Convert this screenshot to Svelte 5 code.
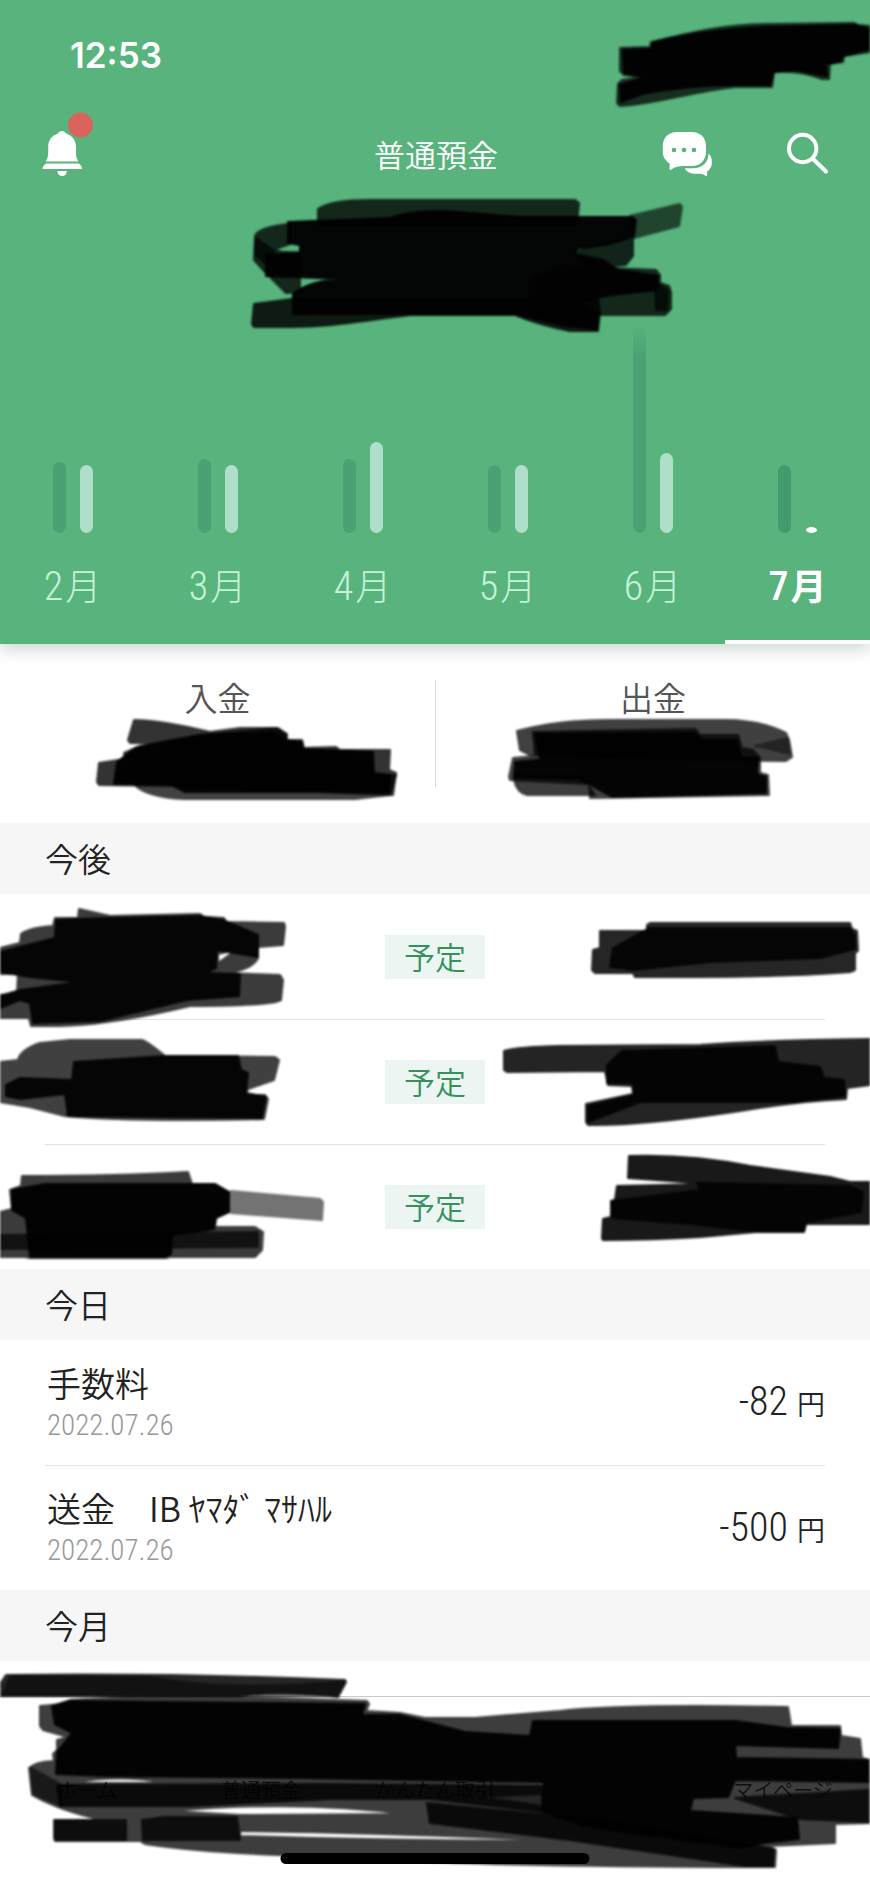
<script lang="ts">
	interface Month {
		label: string;
		income: number;
		spend: number;
	}

	interface Mark {
		d: string;
		o: number;
	}

	const months: Month[] = [
		{ label: '2', income: 71, spend: 68 },
		{ label: '3', income: 74, spend: 68 },
		{ label: '4', income: 74, spend: 91 },
		{ label: '5', income: 68, spend: 68 },
		{ label: '6', income: 209, spend: 80 },
		{ label: '7', income: 68, spend: 6 }
	];

	const today = [
		{ title: '手数料', date: '2022.07.26', amount: '-82' },
		{ title: '送金　IB ﾔﾏﾀﾞ ﾏｻﾊﾙ', date: '2022.07.26', amount: '-500' }
	];

	const tabs = ['ホーム', '普通預金', 'かんたん取引', '', 'マイページ'];

	let selected = $state('7');

	// marker strokes that cover the private parts, one set per block
	const headerMarks: Mark[] = [
		{ o: 0.75, d: 'M620 48L650 47 651 42C690 33 720 25 765 24L854 23 858 25 870 26V52L844 56 843 62 830 64 829 79 822 79Q800 70 774 72L772 87H735C690 92 660 103 620 106L617 103 618 84 622 80 642 77 624 75 620 71Z' },
		{ o: 0.97, d: 'M623 50L651 49 653 43Q700 30 765 27L854 25 870 29V49L843 56 841 61 826 64 827 76 795 70 774 72 770 85 735 85Q690 85 642 94L621 102 620 85 645 77 624 73Z' },
		{ o: 0.78, d: 'M318 209C328 202 350 200 370 200H575L579 203 577 224H318Z' },
		{ o: 0.78, d: 'M255 236Q258 227 290 224V244L273 250Q285 253 300 252V292L286 293 265 272 254 260Z' },
		{ o: 0.62, d: 'M630 216L680 204 682 207 679 226 634 238Z' },
		{ o: 0.8, d: 'M574 252L590 247 633 238V256L626 265 590 268Z' },
		{ o: 0.78, d: 'M560 266L656 270 660 275V283L669 286 671 292V309L665 315H530V280Z' },
		{ o: 0.85, d: 'M254 304L292 299H598L600 312 598 331H570Q540 325 515 315H410C360 321 330 327 290 327H254L252 324Z' },
		{ o: 0.97, d: 'M288 222L390 218Q420 207 470 213L520 217H632L636 220 634 236Q610 246 578 248L574 254 603 260 618 270 658 276 657 290 610 295 575 303 598 312 597 329 565 326 515 314H293V294Q310 280 345 279L266 276V255L300 253V245L288 243Z' },
		{ o: 0.7, d: 'M256 238L275 251 266 264 255 255ZM655 282L668 290 667 310 656 310Z' }
	];

	const summaryMarks: Mark[] = [
		{ o: 0.8, d: 'M134 720Q160 720 210 732L240 728H276L286 734V745L130 743 128 740Z' },
		{ o: 0.74, d: 'M134 784Q145 797 185 799H355L390 795 396 775 150 780Z' },
		{ o: 0.8, d: 'M99 763L125 759 124 753 140 746 200 735 278 728 287 734V740L302 740 304 748 336 747 340 750H390L389 770 396 773 393 795 170 786 99 785 97 782Z' },
		{ o: 0.97, d: 'M117 762L135 748 200 735 276 733 285 740 302 742 303 749 373 752 374 773 390 775 389 792H185L170 784 114 784Z' },
		{ o: 0.75, d: 'M517 731C550 722 580 720 610 720H725C750 720 770 725 786 733L789 740 792 757 786 761 700 760 530 755 520 750Z' },
		{ o: 0.76, d: 'M514 776H582L595 795H527Q517 793 514 780Z' },
		{ o: 0.75, d: 'M513 758L535 756 533 732 695 729 700 735 738 735 742 748 753 750 760 758V773L768 775 769 795 590 798 589 784 510 780 509 777Z' },
		{ o: 0.95, d: 'M535 734L695 733 702 740 737 740 741 757 758 758 757 774 766 777 766 793 612 797 580 779 514 777 515 762 562 757 540 758Z' },
		{ o: 0.45, d: 'M755 746L788 738 790 754 760 747Z' }
	];

	const plannedMarks: Mark[] = [
		{ o: 0.77, d: 'M0 948L20 943 21 934Q28 928 53 926L55 918H78L79 909 110 916 200 914 204 917 224 918 226 922 284 923 285 927 283 945 258 947V958Q252 970 225 973L280 975 283 980 281 1000Q270 1006 190 1006 110 1025 60 1026H31L29 1018H0V995L17 993 18 974H0ZM218 954V963Q230 955 235 950Z' },
		{ o: 0.92, d: 'M0 952L55 938 56 920 78 919 110 918 200 916 223 920 258 935V957L217 950 216 968 205 973 240 974 239 996 187 1000 100 1021 33 1023 30 1003 20 1000 0 1008V996L20 990 80 982 30 977 0 972Z' },
		{ o: 0.85, d: 'M600 931H647V925L650 923H850L852 929 857 931 858 951 855 953V970L850 972Q780 977 700 977H635L633 973H595L592 970 593 950 600 948Z' },
		{ o: 0.88, d: 'M613 948L649 928H850L855 935V949L820 958 710 962 633 970 610 967Z' },
		{ o: 0.75, d: 'M0 1062L18 1060Q20 1050 40 1043L70 1040H142Q148 1042 165 1056L275 1057 279 1060 274 1080 248 1089 245 1095H265L268 1099 264 1119Q130 1122 65 1116L30 1107 0 1102Z' },
		{ o: 0.92, d: 'M6 1085L20 1078 72 1080 74 1062 165 1056H238L241 1070 248 1073 246 1093 266 1097 262 1118 68 1116 65 1094 20 1099 6 1096Z' },
		{ o: 0.86, d: 'M504 1051Q515 1047 560 1046L700 1045Q770 1040 870 1039V1085L847 1088 846 1099Q800 1101 740 1111 640 1126 588 1125L586 1122V1104L633 1094 632 1086 608 1085 605 1071 507 1072 504 1070Z' },
		{ o: 0.9, d: 'M622 1051L775 1046 778 1062 820 1067 824 1078 844 1080 845 1096 794 1102H640L588 1122 588 1106 634 1095 633 1083 607 1083V1065Z' },
		{ o: 0.55, d: 'M231 1191L320 1199 323 1202 322 1220 231 1213Z' },
		{ o: 0.77, d: 'M22 1176Q120 1176 188 1172L192 1184H215L229 1192V1212L216 1217 215 1227H255L263 1232 262 1250 255 1257H170L166 1258H30L25 1257H0V1212L12 1209 10 1190 21 1186Z' },
		{ o: 0.95, d: 'M12 1190L45 1184H215L229 1192V1212L216 1218 214 1229 172 1235 171 1254 165 1257H30L26 1218 12 1210Z' },
		{ o: 0.7, d: 'M0 1235L258 1232V1247L0 1249Z' },
		{ o: 0.9, d: 'M629 1156Q690 1154 750 1166L830 1177 850 1182H870V1224H806L804 1232H755L700 1237Q650 1240 603 1240L602 1238 603 1219 611 1217V1201L615 1200 617 1186 710 1184Q670 1181 628 1178Z' },
		{ o: 0.85, d: 'M612 1201L700 1190 697 1183 850 1186 863 1192 861 1212 806 1222 804 1231 752 1231 690 1224 612 1218Z' }
	];

	const tabMarks: Mark[] = [
		{ o: 0.85, d: 'M6 1675Q180 1673 345 1680L346 1682 338 1697Q280 1690 240 1696H0V1684Z' },
		{ o: 0.55, d: 'M10 1676L150 1677Q230 1692 345 1681L337 1696H2Z' },
		{ o: 0.76, d: 'M40 1706L64 1704 70 1700Q180 1694 367 1701L369 1704 366 1711 400 1713 425 1718 475 1718 560 1711Q620 1704 788 1707L791 1726H840L841 1736 860 1739 862 1758 870 1760V1823L835 1824V1843L768 1846 776 1850 775 1867 740 1867Q520 1866 440 1862L280 1855Q200 1852 145 1844L140 1841H55L54 1838 54 1820H102Q60 1811 32 1795L29 1768Q35 1762 54 1761L53 1754 57 1750V1740L68 1737 43 1730 40 1726ZM72 1783Q120 1774 165 1783ZM170 1811Q300 1800 405 1814L240 1815ZM240 1831Q400 1833 570 1841 400 1841 240 1836ZM480 1797L542 1794V1806Z' },
		{ o: 0.96, d: 'M52 1706L68 1701 365 1704 362 1715H400L465 1732 530 1736 533 1721 735 1721 787 1728 840 1729 838 1748 735 1745 736 1758 868 1760V1782L735 1780 728 1797 693 1798 690 1811 797 1818 799 1839 764 1843 740 1848 590 1827 543 1812 544 1782 300 1778 105 1776 56 1774 57 1752 72 1733 55 1724Z' },
		{ o: 0.85, d: 'M57 1785L330 1784 545 1786 543 1812 430 1799 330 1799 190 1806H60ZM427 1803L600 1820 774 1849 773 1866 745 1866 570 1840 430 1823Z' },
		{ o: 0.8, d: 'M55 1820H126V1840H55ZM142 1820L165 1817H237L240 1840H143ZM735 1798L868 1790V1822L800 1819Z' },
		{ o: 0.6, d: 'M31 1768L60 1784 62 1806 33 1794Z' }
	];
</script>

{#snippet marker(marks: Mark[], viewBox: string)}
	<svg class="marker" {viewBox} preserveAspectRatio="none" aria-hidden="true">
		{#each marks as mark}
			<path d={mark.d} opacity={mark.o} fill-rule="evenodd" />
		{/each}
	</svg>
{/snippet}

<div class="app">
	<header class="header">
		<div class="status"><time>12:53</time></div>

		<div class="nav">
			<button class="icon" aria-label="お知らせ">
				<svg width="52" height="88" viewBox="42 110 52 88">
					<circle cx="80.500" cy="125" r="12.500" fill="#dc635b" />
					<path
						fill="#fff"
						d="M62 131c2 0 3.500 1.200 4 2.600 6.500 2 10 7 10 13.400v6c0 4 1 6.500 2.300 8.400H45.700c1.300-1.900 2.500-4.400 2.500-8.400v-6c0-6.400 3.300-11.400 9.800-13.400.5-1.400 2-2.600 4-2.600zM46 163.500h33c2 1.500 3 3 3 5.500H42.500c0-2.500 1.500-4 3.500-5.500zM57.500 171h9.300c0 3-2 5-4.600 5s-4.700-2-4.700-5z"
					/>
				</svg>
			</button>
			<h1>普通預金</h1>
			<div class="nav-right">
				<button class="icon" aria-label="チャット">
					<svg width="52" height="48" viewBox="662 130 52 48">
						<path
							fill="#fff"
							d="M677 132h15c8 0 14 5.500 14 14v6c0 8-5.500 14-14 14h-9c-4 0-8 .5-12 3.700-.8.600-1.600.2-1.500-.8l.3-5.200c-4-2.500-7-6.500-7-11.700v-6c0-8.500 6-14 14.200-14z"
						/>
						<path
							fill="#fff"
							d="M708.500 153.500c3 3 3.800 6.500 3.300 10.500-.5 3.500-2.300 6-4.800 7.800l.2 3.500c0 .8-.6 1-1.200.6-2.500-1.600-4.500-2.200-7.500-2.200H694c-4 0-7.500-1.700-9.300-5.400h8.300c9 0 15.500-5.800 15.500-14.800z"
						/>
						<g fill="#58b37d">
							<circle cx="674" cy="150" r="2.300" />
							<circle cx="684" cy="150" r="2.300" />
							<circle cx="694" cy="150" r="2.300" />
						</g>
					</svg>
				</button>
				<button class="icon" aria-label="検索">
					<svg width="44" height="48" viewBox="786 130 44 48" fill="none" stroke="#fff">
						<circle cx="802.700" cy="148.500" r="13.700" stroke-width="4" />
						<path d="M812.500 158.500L826 171.500" stroke-width="4" stroke-linecap="round" />
					</svg>
				</button>
			</div>
		</div>

		<div class="chart">
			{#each months as month}
				<button
					class="month"
					class:active={selected === month.label}
					onclick={() => (selected = month.label)}
				>
					<span class="bars">
						<span class="bar income" class:over={month.income > 200} style="height: {month.income}px"></span>
						<span class="bar spend" class:dot={month.spend < 10} style="height: {month.spend}px"></span>
					</span>
					<span class="label"><span class="num">{month.label}</span>月</span>
				</button>
			{/each}
		</div>
		{@render marker(headerMarks, '0 0 870 644')}
	</header>

	<main>
		<section class="summary">
			<div class="sum">入金</div>
			<div class="sum">出金</div>
			{@render marker(summaryMarks, '0 644 870 179')}
		</section>

		<h2>今後</h2>
		<div class="planned">
			<ul>
				{#each [1, 2, 3] as _}
					<li class="row center"><span class="badge">予定</span></li>
				{/each}
			</ul>
			{@render marker(plannedMarks, '0 894 870 375')}
		</div>

		<h2>今日</h2>
		<ul>
			{#each today as item}
				<li class="row">
					<div>
						<div class="title">{item.title}</div>
						<div class="date">{item.date}</div>
					</div>
					<div class="amount"><span class="num">{item.amount}</span><span>円</span></div>
				</li>
			{/each}
		</ul>

		<h2>今月</h2>
		<div class="peek"></div>
	</main>

	<nav class="tabs">
		{#each tabs as tab}
			{#if tab}
				<button class="tab">{tab}</button>
			{:else}
				<span></span>
			{/if}
		{/each}
		<!-- starts above the bar, over the row that peeks out -->
		<div class="tab-marks">{@render marker(tabMarks, '0 1661 870 221')}</div>
		<div class="home-indicator"></div>
	</nav>
</div>

<style>
	:global(body) {
		background: #fff;
	}

	.app {
		font-family: 'Noto Sans CJK JP', sans-serif;
		font-weight: 350;
		color: #222;
	}

	button {
		padding: 0;
		border: none;
		background: none;
		color: inherit;
		font: inherit;
		cursor: pointer;
	}

	ul {
		margin: 0;
		padding: 0;
		list-style: none;
	}

	.marker {
		position: absolute;
		inset: 0;
		width: 100%;
		height: 100%;
		stroke: #000;
		stroke-width: 2px;
		stroke-linejoin: round;
		filter: blur(1px);
		pointer-events: none;
	}

	.num,
	.date {
		font-family: 'Liberation Sans Narrow', 'Roboto Condensed', Roboto, sans-serif;
		font-weight: 300;
	}

	.header {
		position: relative;
		z-index: 1;
		background: #58b37d;
		color: #fff;
		box-shadow: 0 6px 14px rgba(40, 90, 65, 0.22);
	}

	.status {
		display: flex;
		align-items: center;
		height: 110px;
		padding-left: 70px;
		font-family: Inter, sans-serif;
		font-size: 35px;
		font-weight: 600;
	}

	.nav {
		display: grid;
		grid-template-columns: 1fr auto 1fr;
		align-items: center;
		height: 84px;
		padding: 0 40px 0 42px;
	}

	.nav h1 {
		margin: 0;
		font-size: 31px;
		font-weight: 350;
		line-height: 44px;
	}

	.icon {
		display: flex;
		justify-self: start;
	}

	.nav-right {
		display: flex;
		justify-content: flex-end;
		gap: 72px;
	}

	.chart {
		display: grid;
		grid-template-columns: repeat(6, 1fr);
		padding-top: 130px;
	}

	.month {
		display: flex;
		flex-direction: column;
		align-items: center;
		color: #c5f3d8;
		font-weight: 300;
		border-bottom: 4px solid transparent;
	}

	.month.active {
		color: #fff;
		font-weight: 700;
		border-color: #fff;
	}

	.bars {
		display: flex;
		align-items: flex-end;
		justify-content: center;
		gap: 14px;
		height: 209px;
	}

	.bar {
		width: 13px;
		border-radius: 7px;
	}

	.income {
		background: #4ba174;
	}

	.income.over {
		background: linear-gradient(#58b37d, #4ba174 32px);
	}

	.spend {
		background: #afdfc8;
	}

	.active .income {
		background: #439a6f;
	}

	.active .spend {
		background: #fff;
	}

	.spend.dot {
		width: 11px;
		margin: 0 1px;
		border-radius: 50%;
	}

	.label {
		display: flex;
		align-items: baseline;
		gap: 2px;
		height: 48px;
		margin: 27px 0 32px;
		font-size: 36px;
		line-height: 48px;
	}

	.label .num {
		font-size: 40px;
	}

	.active .num {
		font-weight: 500;
	}

	.summary {
		position: relative;
		display: grid;
		grid-template-columns: 1fr 1fr;
		padding: 36px 0;
	}

	.sum {
		height: 107px;
		color: #555;
		font-size: 33px;
		line-height: 34px;
		text-align: center;
	}

	.sum + .sum {
		border-left: 1px solid #d8d8d8;
	}

	h2 {
		margin: 0;
		padding: 0 45px;
		background: #f6f6f6;
		font-size: 33px;
		font-weight: 350;
		line-height: 71px;
	}

	.planned {
		position: relative;
	}

	.row {
		display: flex;
		align-items: center;
		justify-content: space-between;
		box-sizing: border-box;
		height: 125px;
		margin: 0 45px;
		padding-left: 2px;
	}

	.row + .row {
		border-top: 1px solid #e2e2e2;
	}

	.row.center {
		justify-content: center;
		padding: 0;
	}

	.badge {
		height: 44px;
		padding: 0 19px;
		background: #edf5f3;
		color: #36915f;
		font-size: 31px;
		line-height: 42px;
	}

	.title {
		font-size: 34px;
		line-height: 44px;
		white-space: pre;
	}

	.date {
		color: #999;
		font-size: 29px;
		line-height: 40px;
	}

	.amount {
		display: flex;
		align-items: baseline;
		gap: 9px;
		font-size: 28px;
		line-height: 48px;
	}

	.amount .num {
		font-size: 40px;
	}

	.peek {
		height: 35px;
	}

	.tabs {
		position: relative;
		display: grid;
		grid-template-columns: repeat(5, 1fr);
		height: 185px;
		border-top: 1px solid #c8cbca;
	}

	.tab {
		align-self: start;
		padding-top: 78px;
		color: #444;
		font-size: 20px;
		line-height: 30px;
	}

	.tab-marks {
		position: absolute;
		inset: -36px 0 0;
		pointer-events: none;
	}

	.home-indicator {
		position: absolute;
		left: 50%;
		bottom: 18px;
		width: 309px;
		height: 11px;
		border-radius: 6px;
		background: #000;
		transform: translateX(-50%);
	}
</style>
